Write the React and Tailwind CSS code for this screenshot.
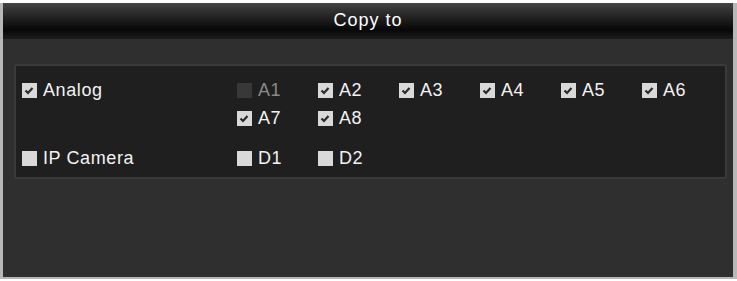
import React from "react";

const font = { fontFamily: '"Liberation Sans", Arial, sans-serif' };

function Box({ checked, disabled }) {
  if (disabled) {
    return <span className="block w-[15px] h-[15px] bg-[#383838] shrink-0" />;
  }
  return (
    <span className="flex items-center justify-center w-[15px] h-[15px] bg-[#d9d9d9] shrink-0">
      {checked && (
        <svg width="15" height="15" viewBox="0 0 15 15">
          <path d="M3.5 7.5 L6 10 L10.5 5" fill="none" stroke="#2a2a2a" strokeWidth="2.2" />
        </svg>
      )}
    </span>
  );
}

function Item({ label, checked, disabled, className = "" }) {
  return (
    <div className={"flex items-center gap-[6px] h-[28px] " + className}>
      <Box checked={checked} disabled={disabled} />
      <span
        className={
          "text-[18px] tracking-[0.6px] leading-none " +
          (disabled ? "text-[#8a8a8a]" : "text-[#f2f2f2]")
        }
      >
        {label}
      </span>
    </div>
  );
}

const analog = ["A1", "A2", "A3", "A4", "A5", "A6", "A7", "A8"];
const ip = ["D1", "D2"];

export default function App() {
  return (
    <div className="w-[737px] h-[281px] bg-white pt-[3px]" style={font}>
      <div className="h-[276px] border-l-[3px] border-r-[4px] border-b-[2px] border-[#b8b8b8] bg-[#2f2f2f] flex flex-col">
        {/* header */}
        <div className="h-[36px] flex items-center justify-center bg-gradient-to-b from-[#444444] via-[#080808] via-75% to-[#1d1d1d]">
          <span className="text-[18px] tracking-[1px] text-white pb-[2px]">Copy to</span>
        </div>

        {/* panel */}
        <div className="mt-[25px] ml-[11px] mr-[6px] rounded-[3px] border-[2px] border-[#3a3a3a] bg-[#1f1f1f] pt-[10px] pb-[5px] pl-[6px]">
          <div className="flex">
            <div className="w-[215px] shrink-0">
              <Item label="Analog" checked />
            </div>
            <div className="flex flex-wrap w-[486px] shrink-0">
              {analog.map((a) => (
                <Item
                  key={a}
                  label={a}
                  checked={a !== "A1"}
                  disabled={a === "A1"}
                  className="w-[81px]"
                />
              ))}
            </div>
          </div>
          <div className="flex mt-[12px]">
            <div className="w-[215px] shrink-0">
              <Item label="IP Camera" />
            </div>
            <div className="flex flex-wrap w-[486px] shrink-0">
              {ip.map((d) => (
                <Item key={d} label={d} className="w-[81px]" />
              ))}
            </div>
          </div>
        </div>
      </div>
    </div>
  );
}
